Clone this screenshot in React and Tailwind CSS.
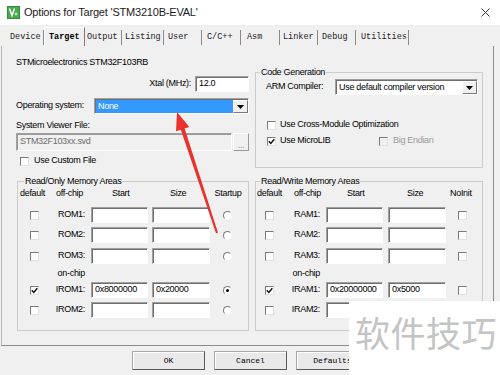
import React from 'react';

const tabs = [
  { label: 'Device', w: 'w-[40px]', pl: 'pl-[6px]' },
  { label: 'Target', w: 'w-[41px]', pl: 'pl-[4px]', active: true },
  { label: 'Output', w: 'w-[37px]', pl: 'pl-[2px]' },
  { label: 'Listing', w: 'w-[42px]', pl: 'pl-[3px]' },
  { label: 'User', w: 'w-[38px]', pl: 'pl-[4px]' },
  { label: 'C/C++', w: 'w-[39px]', pl: 'pl-[5px]' },
  { label: 'Asm', w: 'w-[39px]', pl: 'pl-[6px]' },
  { label: 'Linker', w: 'w-[38px]', pl: 'pl-[3px]' },
  { label: 'Debug', w: 'w-[38px]', pl: 'pl-[4px]' },
  { label: 'Utilities', w: 'w-[53px]', pl: 'pl-[5px]' },
];

function Check({ checked, disabled }) {
  return (
    <span
      className={`relative inline-flex items-center justify-center w-[9px] h-[9px] shrink-0 border border-t-[#7a7a7a] border-l-[#7a7a7a] border-r-[#e2e2e2] border-b-[#e2e2e2] ${
        disabled ? 'bg-[#f0f0f0]' : 'bg-white'
      }`}
    >
      {checked && (
        <svg width="7" height="7" viewBox="0 0 7 7">
          <path d="M0.8 3.2 L2.8 5.4 L6.3 1.2" fill="none" stroke="#111" strokeWidth="1.5" />
        </svg>
      )}
    </span>
  );
}

function Radio({ checked }) {
  return (
    <span className="inline-flex items-center justify-center w-[9px] h-[9px] rounded-full border border-t-[#7a7a7a] border-l-[#7a7a7a] border-r-[#f4f4f4] border-b-[#f4f4f4] bg-white">
      {checked && <span className="w-[3px] h-[3px] rounded-full bg-black" />}
    </span>
  );
}

function Field({ value, w, disabled }) {
  return (
    <div
      className={`h-[16px] border border-t-[#a0a0a0] border-l-[#a0a0a0] border-r-white border-b-white shadow-[inset_1px_1px_0_#6f6f6f] pl-[3px] leading-[13px] ${w} ${
        disabled ? 'bg-[#f0f0f0] text-[#6d6d6d]' : 'bg-white'
      }`}
    >
      {value}
    </div>
  );
}

function Arrow() {
  return (
    <svg width="7" height="4" viewBox="0 0 7 4">
      <path d="M0 0 H7 L3.5 4 Z" fill="#000" />
    </svg>
  );
}

function Select({ value, w, selected }) {
  return (
    <div
      className={`flex h-[16px] border border-t-[#a0a0a0] border-l-[#a0a0a0] border-r-white border-b-white shadow-[inset_1px_1px_0_#6f6f6f] bg-white ${w}`}
    >
      <div
        className={`flex-1 flex items-center pl-[2px] mt-[1px] ml-[1px] ${
          selected ? 'bg-[#3399ff] text-white' : ''
        }`}
      >
        {value}
      </div>
      <div className="w-[15px] mt-[1px] flex items-center justify-center bg-[#f0f0f0] border border-t-white border-l-white border-r-[#7a7a7a] border-b-[#7a7a7a]">
        <Arrow />
      </div>
    </div>
  );
}

function MemRow({ label, start = '', size = '', checked, tail, left }) {
  return (
    <div className="flex items-center h-[16px]">
      <div className={left ? 'w-[33px] pl-[12px] flex' : 'w-[29px] pl-[9px] flex'}>
        <Check checked={checked} />
      </div>
      <div className={left ? 'w-[40px] text-right pr-[6px]' : 'w-[41px] text-right pr-[6px]'}>{label}</div>
      <div className={left ? 'w-[61px]' : 'w-[62px]'}>
        <Field value={start} w="w-[57px]" />
      </div>
      <div className={left ? 'w-[61px]' : 'w-[62px]'}>
        <Field value={size} w="w-[58px]" />
      </div>
      {tail}
    </div>
  );
}

function Button({ children }) {
  return (
    <div className="w-[73px] h-[19px] flex items-center justify-center bg-[#e9e9e9] border border-t-[#a8a8a8] border-l-[#a8a8a8] border-r-[#5a5a5a] border-b-[#5a5a5a] shadow-[inset_1px_1px_0_#fff]">
      {children}
    </div>
  );
}

export default function App() {
  return (
    <div className="w-[500px] h-[375px] relative overflow-hidden bg-[#f0f0f0] font-['Liberation_Sans',Arial,sans-serif] text-[9px] tracking-[-0.3px] text-black">
      {/* title bar */}
      <div className="h-[25px] bg-white flex items-center pl-[7px] pr-[10px]">
        <svg width="13" height="13" viewBox="0 0 13 13">
          <rect x="0" y="0" width="13" height="13" fill="#2f8f3a" />
          <rect x="1" y="1" width="11" height="11" fill="#4aa84f" />
          <path d="M2.5 2.5 L5 9.5 L7.5 2.5" fill="none" stroke="#fff" strokeWidth="1.5" />
          <path d="M7.5 8 h3 M9 6.5 v3" stroke="#e8f5e0" strokeWidth="1" />
        </svg>
        <span className="ml-[4px] text-[11px] tracking-[-0.2px] text-[#1a1a1a]">Options for Target 'STM3210B-EVAL'</span>
        <svg className="ml-auto" width="9" height="9" viewBox="0 0 9 9">
          <path d="M0.5 0.5 L8.5 8.5 M8.5 0.5 L0.5 8.5" stroke="#333" strokeWidth="1" />
        </svg>
      </div>

      {/* tabs */}
      <div className="h-[21px] flex items-end pl-[4px] font-['Liberation_Mono',monospace] text-[8.5px] tracking-normal text-[#222]">
        {tabs.map((t) => (
          <div
            key={t.label}
            className={`${t.w} ${t.pl} flex items-center border-r ${
              t.active
                ? 'h-[19px] font-bold border-t border-l border-t-white border-l-white border-r-[#7a7a7a] text-black'
                : 'h-[15px] mb-[1px] border-r-[#8a8a8a]'
            }`}
          >
            {t.label}
          </div>
        ))}
      </div>

      {/* tab panel */}
      <div className="ml-[1px] w-[493px] h-[300px] border-l border-r border-b border-l-[#b8b8b8] border-r-[#8c8c8c] border-b-[#8c8c8c] pl-[14px] pt-[9px]">
        <div className="flex items-start">
          <div className="w-[233px] flex flex-col">
            <div className="h-[14px] leading-[14px]">STMicroelectronics STM32F103RB</div>
            <div className="mt-[7px] flex items-center justify-end">
              <span className="mr-[4px]">Xtal (MHz):</span>
              <Field value="12.0" w="w-[54px]" />
            </div>
            <div className="mt-[6px] flex items-center">
              <span className="w-[78px]">Operating system:</span>
              <Select value="None" w="w-[155px]" selected />
            </div>
            <div className="mt-[5px] h-[12px] leading-[12px]">System Viewer File:</div>
            <div className="mt-[2px] flex">
              <div className="h-[18px] w-[216px] border border-t-[#a0a0a0] border-l-[#a0a0a0] border-r-white border-b-white shadow-[inset_1px_1px_0_#9a9a9a] bg-[#f0f0f0] text-[#6d6d6d] pl-[3px] flex items-center">
                STM32F103xx.svd
              </div>
              <div className="ml-[1px] w-[16px] h-[18px] bg-[#f0f0f0] border border-t-white border-l-white border-r-[#9a9a9a] border-b-[#9a9a9a] text-[#8a8a8a] flex items-end justify-center leading-[10px]">
                ...
              </div>
            </div>
            <div className="mt-[5px] h-[10px] flex items-center pl-[4px] gap-[5px]">
              <Check />
              <span>Use Custom File</span>
            </div>
          </div>

          <fieldset className="ml-[6px] mt-[11px] w-[228px] h-[102px] border border-[#cbcbcb]">
            <legend className="ml-[4px] px-[1px] leading-[12px]">Code Generation</legend>
            <div className="mt-[2px] h-[14px] flex items-center pl-[10px]">
              <span className="w-[69px]">ARM Compiler:</span>
              <Select value="Use default compiler version" w="w-[143px]" />
            </div>
            <div className="mt-[26px] h-[10px] flex items-center pl-[11px] gap-[4px]">
              <Check />
              <span>Use Cross-Module Optimization</span>
            </div>
            <div className="mt-[6px] h-[10px] flex items-center pl-[11px]">
              <div className="w-[112px] flex items-center gap-[4px]">
                <Check checked />
                <span>Use MicroLIB</span>
              </div>
              <div className="flex items-center gap-[5px] text-[#9a9a9a]">
                <Check disabled />
                <span>Big Endian</span>
              </div>
            </div>
          </fieldset>
        </div>

        {/* memory areas */}
        <div className="mt-[7px] flex">
          <fieldset className="ml-[1px] w-[232px] h-[156px] border border-[#cbcbcb]">
            <legend className="ml-[6px] px-[1px] leading-[12px]">Read/Only Memory Areas</legend>
            <div className="mt-[1px] h-[12px] flex items-center">
              <div className="w-[33px] pl-[2px]">default</div>
              <div className="w-[40px] text-right pr-[8px]">off-chip</div>
              <div className="w-[61px] pl-[21px]">Start</div>
              <div className="w-[61px] pl-[18px]">Size</div>
              <div className="w-[30px] text-center">Startup</div>
            </div>
            <div className="mt-[7px]">
              <MemRow left label="ROM1:" tail={<div className="w-[28px] flex justify-center"><Radio /></div>} />
            </div>
            <div className="mt-[4px]">
              <MemRow left label="ROM2:" tail={<div className="w-[28px] flex justify-center"><Radio /></div>} />
            </div>
            <div className="mt-[5px]">
              <MemRow left label="ROM3:" tail={<div className="w-[28px] flex justify-center"><Radio /></div>} />
            </div>
            <div className="mt-[4px] h-[12px] flex items-center">
              <div className="w-[73px] text-right pr-[6px]">on-chip</div>
            </div>
            <div className="mt-[2px]">
              <MemRow
                left
                checked
                label="IROM1:"
                start="0x8000000"
                size="0x20000"
                tail={<div className="w-[28px] flex justify-center"><Radio checked /></div>}
              />
            </div>
            <div className="mt-[4px]">
              <MemRow left label="IROM2:" tail={<div className="w-[28px] flex justify-center"><Radio /></div>} />
            </div>
          </fieldset>

          <fieldset className="ml-[6px] w-[228px] h-[156px] border border-[#cbcbcb]">
            <legend className="ml-[4px] px-[1px] leading-[12px]">Read/Write Memory Areas</legend>
            <div className="mt-[1px] h-[12px] flex items-center">
              <div className="w-[29px] pl-[1px]">default</div>
              <div className="w-[41px] text-right pr-[5px]">off-chip</div>
              <div className="w-[62px] pl-[21px]">Start</div>
              <div className="w-[62px] pl-[19px]">Size</div>
              <div className="pl-[0px]">NoInit</div>
            </div>
            <div className="mt-[7px]">
              <MemRow label="RAM1:" tail={<div className="pl-[8px] flex"><Check /></div>} />
            </div>
            <div className="mt-[4px]">
              <MemRow label="RAM2:" tail={<div className="pl-[8px] flex"><Check /></div>} />
            </div>
            <div className="mt-[5px]">
              <MemRow label="RAM3:" tail={<div className="pl-[8px] flex"><Check /></div>} />
            </div>
            <div className="mt-[4px] h-[12px] flex items-center">
              <div className="w-[70px] text-right pr-[6px]">on-chip</div>
            </div>
            <div className="mt-[2px]">
              <MemRow
                checked
                label="IRAM1:"
                start="0x20000000"
                size="0x5000"
                tail={<div className="pl-[8px] flex"><Check /></div>}
              />
            </div>
            <div className="mt-[4px]">
              <MemRow label="IRAM2:" tail={<div className="pl-[8px] flex"><Check /></div>} />
            </div>
          </fieldset>
        </div>
      </div>

      {/* buttons */}
      <div className="mt-[5px] flex pl-[132px] gap-[9px] font-['Liberation_Mono',monospace] text-[8px] tracking-normal">
        <Button>OK</Button>
        <Button>Cancel</Button>
        <Button>Defaults</Button>
      </div>

      {/* watermark */}
      <div className="absolute left-[349px] top-[301px] w-[151px] h-[74px] bg-white pl-[6px] pt-[13px] font-['Noto_Sans_CJK_SC',sans-serif] text-[35px] leading-[36px] tracking-[0.5px] text-[#c4c4c4]">
        软件技巧
      </div>

      {/* red arrow annotation */}
      <svg className="absolute left-0 top-0 pointer-events-none" width="500" height="375" viewBox="0 0 500 375">
        <polygon
          points="177,112 189.3,126.9 184.6,128.5 218,232.7 216,233.3 180.8,129.7 176,131.3"
          fill="#e8322b"
        />
      </svg>
    </div>
  );
}
